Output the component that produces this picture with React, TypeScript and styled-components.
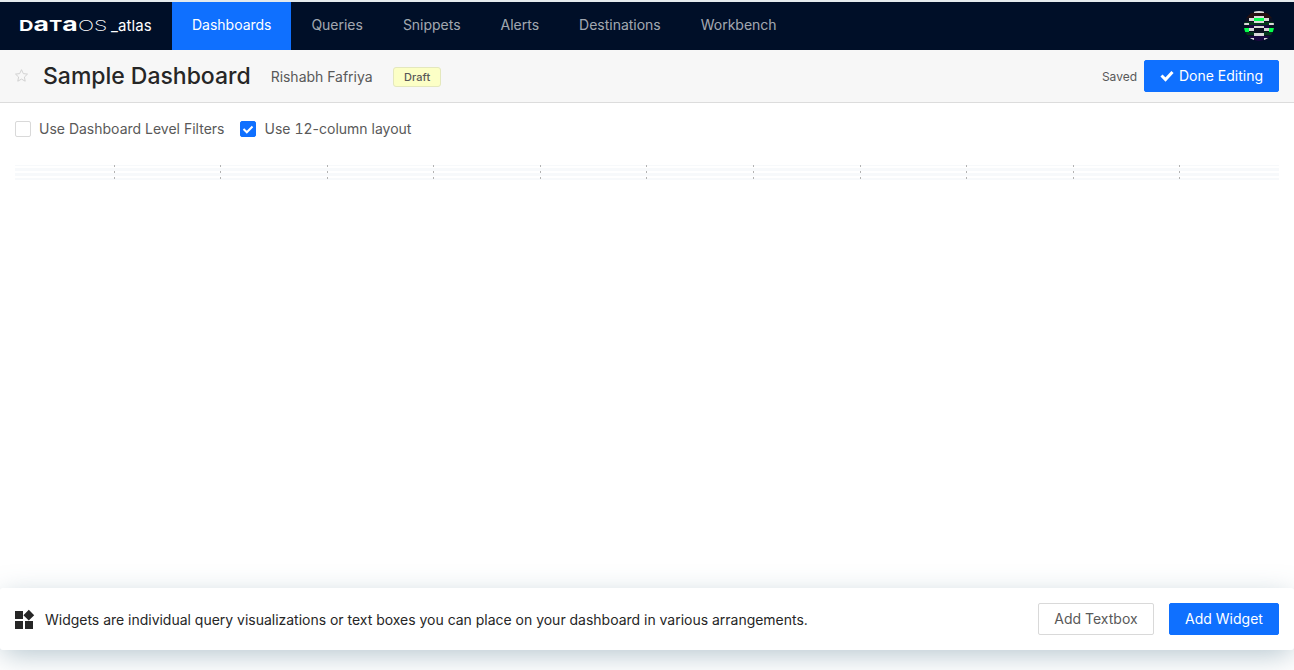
import React from "react";
import styled, { createGlobalStyle } from "styled-components";

const Global = createGlobalStyle`
  * { box-sizing: border-box; }
  body { margin: 0; background: #fff; overflow: hidden; }
  body, button { font-family: Inter, "Liberation Sans", sans-serif; }
`;

const Page = styled.div`
  display: flex;
  flex-direction: column;
  height: 670px;
  overflow: hidden;
  color: #595959;
  font-size: 14px;
`;

const NavBar = styled.nav`
  display: flex;
  flex: none;
  height: 50px;
  border-top: 2px solid #e4eaed;
  background: #000f28;
  padding-right: 20px;
`;

const Brand = styled.div`
  display: flex;
  align-items: baseline;
  width: 172px;
  padding: 9px 0 0 19px;
  color: #fff;
  line-height: 30px;
  white-space: nowrap;
`;

const Wordmark = styled.span<{ $w: number; $scale: number; $weight: number }>`
  display: inline-block;
  width: ${(p) => p.$w}px;
  font-size: 15px;
  font-weight: ${(p) => p.$weight};
  transform: scaleX(${(p) => p.$scale});
  transform-origin: 0 50%;
`;

const TallLower = styled.span`
  font-size: 20px;
  line-height: 1;
`;

const Product = styled.span`
  font-size: 15px;
  letter-spacing: 0.1px;
`;

const NavItem = styled.a<{ $active?: boolean }>`
  padding: 0 20px;
  line-height: 46px;
  letter-spacing: -0.012px;
  color: ${(p) => (p.$active ? "#fff" : "rgba(255,255,255,0.65)")};
  background: ${(p) => (p.$active ? "#0f70ff" : "transparent")};
  ${(p) => p.$active && "width: 119.4px;"}
`;

const Avatar = styled.svg`
  width: 30px;
  height: 30px;
  margin: 9px 0 0 auto;
`;

const Header = styled.header`
  display: flex;
  align-items: center;
  flex: none;
  height: 53px;
  padding: 0 15px;
  background: #f7f7f7;
  border-bottom: 1px solid #dcdcdc;
`;

const Star = styled.svg`
  width: 14px;
  height: 14px;
  margin-right: 14px;
`;

const Title = styled.h1`
  margin: 0 20px 0 0;
  font-size: 23px;
  line-height: 30px;
  font-weight: 500;
  letter-spacing: -0.02px;
  color: #262626;
`;

const Author = styled.span`
  margin: 0 20.5px 0 0;
  letter-spacing: -0.02px;
`;

const Tag = styled.span`
  height: 20px;
  margin-top: 2px;
  padding: 0 9.8px;
  border: 1px solid #e4e8bd;
  border-radius: 3px;
  background: #fcffc6;
  font-size: 11px;
  font-weight: 500;
  line-height: 18px;
  letter-spacing: 0.1px;
`;

const Saved = styled.span`
  margin: 0 7px 0 auto;
  font-size: 12px;
`;

const Button = styled.button<{ $primary?: boolean; $w: number }>`
  display: flex;
  align-items: center;
  justify-content: center;
  gap: 5px;
  width: ${(p) => p.$w}px;
  height: 32px;
  padding: 0 0 1px;
  border: 1px solid ${(p) => (p.$primary ? "#0f70ff" : "#d9d9d9")};
  border-radius: 2px;
  background: ${(p) => (p.$primary ? "#0f70ff" : "#fff")};
  color: ${(p) => (p.$primary ? "#fff" : "#595959")};
  font-size: 14px;
`;

const Options = styled.div`
  display: flex;
  gap: 16px;
  padding: 16px 15px 0;
  height: 62px;
  line-height: 20px;
`;

const Option = styled.label`
  display: flex;
  align-items: center;
  gap: 8px;
  height: 20px;
`;

const Count = styled.span`
  font-variant-numeric: tabular-nums;
`;

const Box = styled.span<{ $on?: boolean }>`
  display: flex;
  width: 16px;
  height: 16px;
  border: 1px solid ${(p) => (p.$on ? "#0f70ff" : "#d9d9d9")};
  border-radius: 2px;
  background: ${(p) => (p.$on ? "#0f70ff" : "#fff")};
`;

const Grid = styled.div`
  height: 15px;
  margin: 0 15px;
  display: grid;
  grid-template-columns: 99.5px repeat(10, 106.58px) 1fr;
  background: repeating-linear-gradient(#f7f9fb 0 1px, #fff 1px 3px, #f7f9fb 3px 5px);
`;

const Column = styled.span`
  border-right: 1px solid transparent;
  border-image: repeating-linear-gradient(transparent 0 1px, #b3b3b3 1px 3px, transparent 3px 5px) 1;
  &:last-child { border: 0; }
`;

const Footer = styled.footer`
  display: flex;
  align-items: center;
  flex: none;
  height: 62px;
  margin: auto 0 20px;
  padding: 0 15px;
  border-radius: 3px;
  background: #fff;
  box-shadow: 0 7px 29px -3px rgba(102, 136, 153, 0.5);
  color: #262626;
`;

const Hint = styled.span`
  margin: 0 auto 0 10px;
  letter-spacing: -0.016px;
`;

const Actions = styled.div`
  display: flex;
  gap: 15px;
`;

const navItems = ["Dashboards", "Queries", "Snippets", "Alerts", "Destinations", "Workbench"];

const UserAvatar = () => (
  <Avatar viewBox="0 0 30 30">
    <defs>
      <clipPath id="round"><circle cx="15" cy="15" r="15" /></clipPath>
    </defs>
    <g clipPath="url(#round)" shapeRendering="crispEdges">
      <path fill="#0b1020" d="M0 0h30v30H0z" />
      <path fill="#241012" d="M0 2h30v5H0z" />
      <path fill="#05381d" d="M0 11h30v3H0zM0 21h10v3H0zM20 21h10v3H20z" />
      <path fill="#190840" d="M5 14h20v3H5zM0 25h30v5H0z" />
      <path fill="#d9d9d9" d="M10 0h10v2H10zM10 5h10v2H10zM5 7h5v3H5zM20 7h5v3h-5zM10 10h10v2H10zM0 12h5v2H0zM25 12h5v2h-5zM10 15h10v2H10zM5 17h5v3H5zM20 17h5v3h-5zM10 22h10v3H10zM5 27h5v2H5zM20 27h5v2h-5z" />
      <path fill="#05ff4d" d="M10 7h10v3H10zM0 17h5v4H0zM25 17h5v4h-5z" />
    </g>
  </Avatar>
);

export default function App() {
  return (
    <Page>
      <Global />
      <NavBar>
        <Brand>
          <Wordmark $w={59} $scale={1.33} $weight={700}>
            D<TallLower>a</TallLower>T<TallLower>a</TallLower>
          </Wordmark>
          <Wordmark $w={33} $scale={1.42} $weight={200}>OS</Wordmark>
          <Product>_atlas</Product>
        </Brand>
        {navItems.map((n, i) => <NavItem key={n} $active={i === 0}>{n}</NavItem>)}
        <UserAvatar />
      </NavBar>
      <Header>
        <Star viewBox="0 0 14 14" fill="none" stroke="#d2d2d2" strokeWidth="1" strokeLinejoin="round">
          <path d="M6.5.7l1.8 3.9 4.2.5-3.1 2.9.8 4.2-3.7-2.1-3.7 2.1.8-4.2L.5 5.1l4.2-.5z" />
        </Star>
        <Title>Sample Dashboard</Title>
        <Author>Rishabh Fafriya</Author>
        <Tag>Draft</Tag>
        <Saved>Saved</Saved>
        <Button $primary $w={135}>
          <svg width="14" height="12" viewBox="0 0 14 12" fill="none" stroke="#fff" strokeWidth="3"><path d="M1.5 5.5l4 4 7-7.5" /></svg>
          Done Editing
        </Button>
      </Header>
      <Options>
        <Option><Box />Use Dashboard Level Filters</Option>
        <Option>
          <Box $on>
            <svg width="14" height="14" viewBox="0 0 14 14" fill="none" stroke="#fff" strokeWidth="2"><path d="M2.5 7l3.3 3.3 5.7-5.8" /></svg>
          </Box>
          <span>Use <Count>12</Count>-column layout</span>
        </Option>
      </Options>
      <Grid>{Array.from({ length: 12 }, (_, i) => <Column key={i} />)}</Grid>
      <Footer>
        <svg width="20" height="20" viewBox="0 0 20 20" fill="#262626">
          <path d="M0 2h8v8H0zM0 12h8v8H0zM10 12h8v8h-8zM13.8 0.8l5.4 5.4-5.4 5.4-5.4-5.4z" />
        </svg>
        <Hint>Widgets are individual query visualizations or text boxes you can place on your dashboard in various arrangements.</Hint>
        <Actions>
          <Button $w={116}>Add Textbox</Button>
          <Button $primary $w={110}>Add Widget</Button>
        </Actions>
      </Footer>
    </Page>
  );
}
